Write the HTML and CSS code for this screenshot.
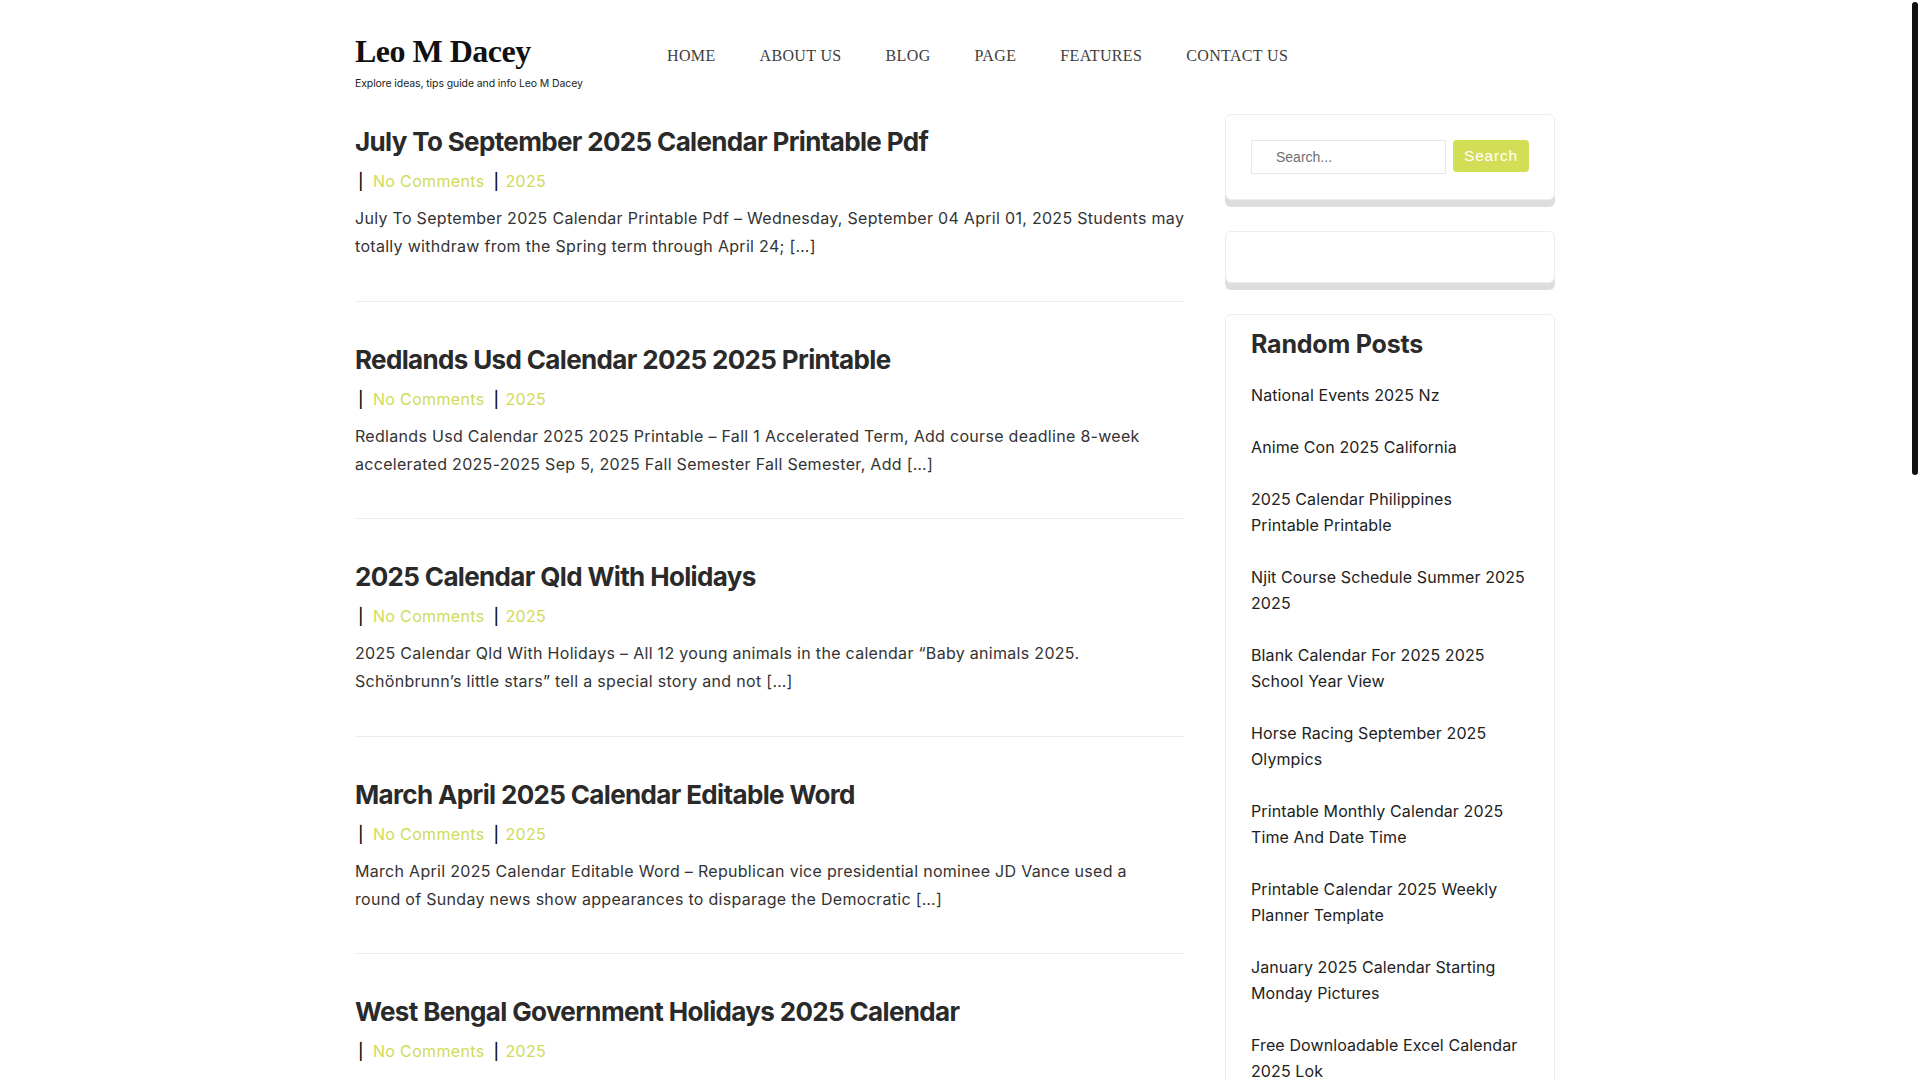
FILE: index.html
```html
<!DOCTYPE html>
<html lang="en">
<head>
<meta charset="utf-8">
<title>Leo M Dacey</title>
<link rel="stylesheet" href="styles.css">
</head>
<body>
<div class="scroll-thumb"></div>
<div class="wrap">
  <header class="site-header">
    <div class="branding">
      <div class="logo">Leo M Dacey</div>
      <div class="tagline">Explore ideas, tips guide and info Leo M Dacey</div>
    </div>
    <nav class="menu">
      <a href="#">HOME</a>
      <a href="#">ABOUT US</a>
      <a href="#">BLOG</a>
      <a href="#">PAGE</a>
      <a href="#">FEATURES</a>
      <a href="#">CONTACT US</a>
    </nav>
  </header>

  <div class="content">
    <main class="posts">
      <article class="post">
        <h2 class="post-title">July To September 2025 Calendar Printable Pdf</h2>
        <div class="meta"><span class="sep">|</span><a href="#">No Comments</a><span class="sep">|</span><a href="#">2025</a></div>
        <p class="excerpt">July To September 2025 Calendar Printable Pdf – Wednesday, September 04 April 01, 2025 Students may<br>totally withdraw from the Spring term through April 24; […]</p>
      </article>
      <article class="post">
        <h2 class="post-title">Redlands Usd Calendar 2025 2025 Printable</h2>
        <div class="meta"><span class="sep">|</span><a href="#">No Comments</a><span class="sep">|</span><a href="#">2025</a></div>
        <p class="excerpt">Redlands Usd Calendar 2025 2025 Printable – Fall 1 Accelerated Term, Add course deadline 8-week<br>accelerated 2025-2025 Sep 5, 2025 Fall Semester Fall Semester, Add […]</p>
      </article>
      <article class="post">
        <h2 class="post-title">2025 Calendar Qld With Holidays</h2>
        <div class="meta"><span class="sep">|</span><a href="#">No Comments</a><span class="sep">|</span><a href="#">2025</a></div>
        <p class="excerpt">2025 Calendar Qld With Holidays – All 12 young animals in the calendar “Baby animals 2025.<br>Schönbrunn’s little stars” tell a special story and not […]</p>
      </article>
      <article class="post">
        <h2 class="post-title">March April 2025 Calendar Editable Word</h2>
        <div class="meta"><span class="sep">|</span><a href="#">No Comments</a><span class="sep">|</span><a href="#">2025</a></div>
        <p class="excerpt">March April 2025 Calendar Editable Word – Republican vice presidential nominee JD Vance used a<br>round of Sunday news show appearances to disparage the Democratic […]</p>
      </article>
      <article class="post">
        <h2 class="post-title">West Bengal Government Holidays 2025 Calendar</h2>
        <div class="meta"><span class="sep">|</span><a href="#">No Comments</a><span class="sep">|</span><a href="#">2025</a></div>
        <p class="excerpt">West Bengal Government Holidays 2025 Calendar – The state government has published the list of<br>public holidays and restricted holidays for the coming year […]</p>
      </article>
      <article class="post">
        <h2 class="post-title">National Events 2025 Nz</h2>
        <div class="meta"><span class="sep">|</span><a href="#">No Comments</a><span class="sep">|</span><a href="#">2025</a></div>
        <p class="excerpt">National Events 2025 Nz – From festivals to sporting fixtures, here is a look at the biggest events<br>happening across the country next year and […]</p>
      </article>
      <article class="post">
        <h2 class="post-title">Anime Con 2025 California</h2>
        <div class="meta"><span class="sep">|</span><a href="#">No Comments</a><span class="sep">|</span><a href="#">2025</a></div>
        <p class="excerpt">Anime Con 2025 California – Fans gather for panels, cosplay contests and exclusive screenings at<br>one of the largest conventions on the West Coast […]</p>
      </article>
      <article class="post">
        <h2 class="post-title">Horse Racing September 2025 Olympics</h2>
        <div class="meta"><span class="sep">|</span><a href="#">No Comments</a><span class="sep">|</span><a href="#">2025</a></div>
        <p class="excerpt">Horse Racing September 2025 Olympics – The equestrian calendar is packed with meetings and<br>championships that riders have been preparing for all […]</p>
      </article>
      <article class="post">
        <h2 class="post-title">Printable Calendar 2025 Weekly Planner Template</h2>
        <div class="meta"><span class="sep">|</span><a href="#">No Comments</a><span class="sep">|</span><a href="#">2025</a></div>
        <p class="excerpt">Printable Calendar 2025 Weekly Planner Template – Plan every week of the year with a clean layout<br>that leaves plenty of room for notes and […]</p>
      </article>
      <article class="post">
        <h2 class="post-title">January 2025 Calendar Starting Monday Pictures</h2>
        <div class="meta"><span class="sep">|</span><a href="#">No Comments</a><span class="sep">|</span><a href="#">2025</a></div>
        <p class="excerpt">January 2025 Calendar Starting Monday Pictures – Start the new year organised with a calendar<br>that begins each week on Monday and includes […]</p>
      </article>
    </main>

    <aside class="sidebar">
      <section class="widget widget-search">
        <form class="search-form">
          <input class="search-field" type="search" placeholder="Search...">
          <button class="search-btn" type="button">Search</button>
        </form>
      </section>
      <section class="widget widget-empty"></section>
      <section class="widget widget-random">
        <h3 class="widget-title">Random Posts</h3>
        <ul class="random-list">
          <li><a href="#">National Events 2025 Nz</a></li>
          <li><a href="#">Anime Con 2025 California</a></li>
          <li><a href="#">2025 Calendar Philippines<br>Printable Printable</a></li>
          <li><a href="#">Njit Course Schedule Summer 2025<br>2025</a></li>
          <li><a href="#">Blank Calendar For 2025 2025<br>School Year View</a></li>
          <li><a href="#">Horse Racing September 2025<br>Olympics</a></li>
          <li><a href="#">Printable Monthly Calendar 2025<br>Time And Date Time</a></li>
          <li><a href="#">Printable Calendar 2025 Weekly<br>Planner Template</a></li>
          <li><a href="#">January 2025 Calendar Starting<br>Monday Pictures</a></li>
          <li><a href="#">Free Downloadable Excel Calendar<br>2025 Lok</a></li>
        </ul>
      </section>
    </aside>
  </div>

  <footer class="site-footer">Copyright © 2025 Leo M Dacey</footer>
</div>
</body>
</html>
```

FILE: styles.css
```css
html {
  background: #ffffff;
}

body {
  margin: 0;
  padding-right: 10px;
  font-family: "Inter", "Noto Sans", sans-serif;
  color: #333333;
  background: #ffffff;
}

/* browser scrollbar thumb as seen in the reference */
.scroll-thumb {
  position: fixed;
  top: 2px;
  right: 2px;
  width: 6px;
  height: 473px;
  background: #111111;
  border-radius: 3px;
  z-index: 10;
}

a {
  text-decoration: none;
  color: inherit;
}

.wrap {
  width: 1200px;
  margin: 0 auto;
}

/* Header */
.site-header {
  display: flex;
  align-items: flex-start;
  height: 114px;
  box-sizing: border-box;
  padding-top: 32px;
}

.branding {
  width: 290px;
  flex: none;
}

.logo {
  font-family: "Liberation Serif", "DejaVu Serif", serif;
  font-weight: 700;
  font-size: 32px;
  line-height: 38px;
  color: #111111;
  letter-spacing: -0.5px;
}

.tagline {
  margin-top: 6px;
  font-size: 10.5px;
  line-height: 16px;
  color: #222222;
  letter-spacing: -0.1px;
}

.menu {
  display: flex;
  margin-top: 14px;
  font-family: "Liberation Serif", "DejaVu Serif", serif;
  font-size: 16px;
  line-height: 20px;
  letter-spacing: 0.35px;
}

.menu a {
  padding: 0 22px;
  color: #3d3d3d;
}

/* Layout */
.content {
  display: flex;
  gap: 40px;
  align-items: flex-start;
}

.posts {
  width: 830px;
  flex: none;
}

.post {
  padding: 40px 0 40.6px;
  border-bottom: 1px solid #ececf3;
}

.post:first-child {
  padding-top: 10px;
}

.post-title {
  margin: 0 0 7px;
  font-size: 26px;
  line-height: 36px;
  font-weight: 650;
  color: #2a2a2a;
  letter-spacing: -0.65px;
}

.meta {
  font-size: 16px;
  line-height: 28px;
  color: #d0db58;
  letter-spacing: 0.35px;
}

.meta .sep {
  color: #111111;
  font-weight: 500;
  margin: 0 9px 0 3px;
}

.meta a + .sep {
  margin: 0 6px 0 9px;
}

.excerpt {
  margin: 9px 0 0;
  font-size: 16px;
  line-height: 28px;
  color: #333333;
  letter-spacing: 0.3px;
}

/* Sidebar */
.sidebar {
  width: 330px;
  flex: none;
}

.widget {
  background: #ffffff;
  border: 1px solid #ededf3;
  border-radius: 6px;
  box-shadow: 0 7px 0 #dddddd;
  padding: 25px;
  margin-bottom: 31px;
}

.widget-empty {
  height: 0;
  padding: 25px;
}

.widget-random {
  box-shadow: none;
  padding: 14px 20px 20px 25px;
}

.search-form {
  display: flex;
  align-items: center;
  gap: 7px;
}

.search-field {
  width: 195px;
  height: 34px;
  box-sizing: border-box;
  border: 1px solid #e6e6ec;
  padding: 0 0 0 24px;
  font-family: "Liberation Sans", Arial, sans-serif;
  font-size: 14px;
  color: #666666;
  outline: none;
  margin: 0;
}

.search-field::placeholder {
  color: #6f6f6f;
}

.search-btn {
  width: 76px;
  height: 32px;
  border: none;
  border-radius: 4px;
  background: #d3de57;
  color: #ffffff;
  font-family: "Liberation Sans", Arial, sans-serif;
  font-size: 15.5px;
  letter-spacing: 0.8px;
  padding: 0;
  margin: -2px 0 0;
}

.widget-title {
  margin: 0 0 23px;
  font-size: 25px;
  line-height: 30px;
  font-weight: 700;
  color: #2b2b2b;
  letter-spacing: -0.2px;
}

.random-list {
  list-style: none;
  margin: 0;
  padding: 0;
}

.random-list li {
  font-size: 16px;
  line-height: 26px;
  color: #222222;
  margin-bottom: 26px;
  letter-spacing: 0.1px;
}

.site-footer {
  margin-top: 60px;
  padding: 40px 0 80px;
  text-align: center;
  font-size: 14px;
  color: #666666;
}
```
